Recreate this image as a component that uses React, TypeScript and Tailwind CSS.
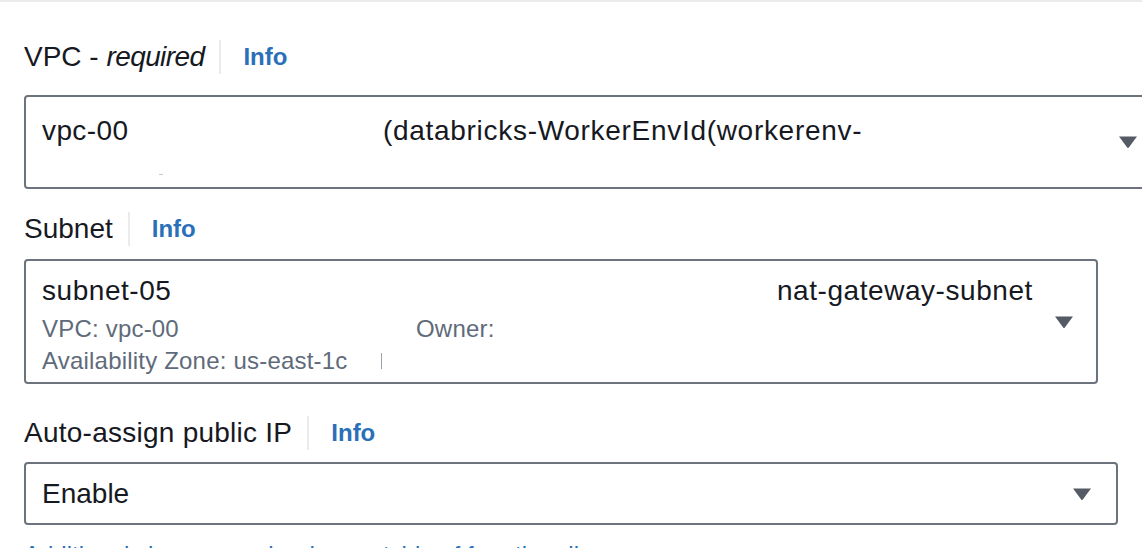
import { ReactNode } from 'react';

const Caret = () => (
  <svg width="20" height="14" viewBox="0 0 20 14" className="shrink-0">
    <path d="M1 1.5 L19 1.5 L10.8 12.6 Q10 13.6 9.2 12.6 Z" fill="#545b64" />
  </svg>
);

const FieldLabel = ({ children }: { children: ReactNode }) => (
  <div className="flex items-center h-[40px]">
    <span className="text-[28px] leading-[40px] text-[#16191f]">{children}</span>
    <span className="ml-[15px] mr-[22px] w-[2px] h-[34px] bg-[#e9ebed]" />
    <span className="text-[24px] leading-[32px] font-bold text-[#2a70b9]">Info</span>
  </div>
);

export default function App() {
  return (
    <div
      className="w-[1142px] h-[548px] overflow-hidden bg-white border-t-2 border-[#e9ebed]"
      style={{ fontFamily: '"Liberation Sans", Arial, sans-serif' }}
    >
      <div className="pl-6 pt-[35px]">
        {/* VPC */}
        <FieldLabel>
          VPC - <i className="tracking-[-0.6px]">required</i>
        </FieldLabel>
        <div className="mt-[18px] w-[1139px] h-[94px] flex border-2 border-[#6c737c] rounded-[4px] pl-4 pr-[23px]">
          <div className="flex-1 pt-[14px]">
            <div className="flex text-[28px] leading-[40px] text-[#16191f] tracking-[0.4px]">
              <span className="w-[341px]">vpc-00</span>
              <span className="tracking-[0.7px]">(databricks-WorkerEnvId(workerenv-</span>
            </div>
            <div className="h-[32px] flex items-end pb-[8px]">
              <span className="ml-[117px] w-[4px] h-[1px] bg-[#c5c9ce]" />
            </div>
          </div>
          <div className="flex items-center">
            <Caret />
          </div>
        </div>

        {/* Subnet */}
        <div className="mt-[20px]">
          <FieldLabel>Subnet</FieldLabel>
        </div>
        <div className="mt-[10px] w-[1074px] h-[125px] flex border-2 border-[#6c737c] rounded-[4px] pl-4 pr-[22px]">
          <div className="flex-1 pt-[10px]">
            <div className="flex text-[28px] leading-[40px] text-[#16191f] tracking-[0.55px]">
              <span className="w-[735px]">subnet-05</span>
              <span>nat-gateway-subnet</span>
            </div>
            <div className="mt-[2px] flex text-[24px] leading-[32px] text-[#5f6b7a] tracking-[0.2px]">
              <span className="w-[374px]">VPC: vpc-00</span>
              <span>Owner:</span>
            </div>
            <div className="flex items-center text-[24px] leading-[32px] text-[#5f6b7a] tracking-[0.2px]">
              <span className="w-[339px]">Availability Zone: us-east-1c</span>
              <span className="w-[1px] h-[16px] bg-[#9ba3ad]" />
            </div>
          </div>
          <div className="flex items-center">
            <Caret />
          </div>
        </div>

        {/* Auto-assign public IP */}
        <div className="mt-[29px]">
          <FieldLabel>
            <span className="tracking-[0.25px]">Auto-assign public IP</span>
          </FieldLabel>
        </div>
        <div className="mt-[9px] w-[1094px] h-[63px] flex items-center border-2 border-[#6c737c] rounded-[4px] pl-4 pr-[24px]">
          <span className="flex-1 text-[28px] leading-[40px] text-[#16191f]">Enable</span>
          <Caret />
        </div>

        <div className="mt-[14px] text-[24px] leading-[32px] text-[#2a70b9] whitespace-nowrap">
          Additional charges apply when outside of free tier allowance
        </div>
      </div>
    </div>
  );
}
